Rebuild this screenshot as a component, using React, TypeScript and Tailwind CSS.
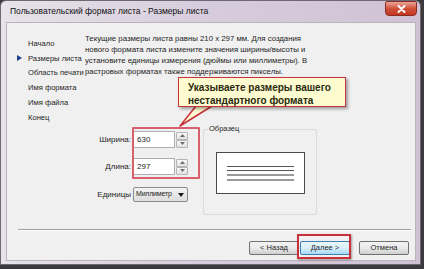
import React from "react";

const F = { fontFamily: '"Liberation Sans", Arial, sans-serif' } as const;

function Spinner() {
  return (
    <div className="flex flex-col w-[12px] h-[16px] ml-[1px]">
      <div className="flex-1 border border-[#b5b5b5] bg-gradient-to-b from-[#f7f7f7] to-[#e3e3e3] rounded-[1px] flex items-center justify-center">
        <svg width="5" height="3" viewBox="0 0 5 3"><polygon points="0,3 5,3 2.5,0" fill="#6d6d6d" /></svg>
      </div>
      <div className="flex-1 border border-[#b5b5b5] bg-gradient-to-b from-[#f7f7f7] to-[#e3e3e3] rounded-[1px] flex items-center justify-center">
        <svg width="5" height="3" viewBox="0 0 5 3"><polygon points="0,0 5,0 2.5,3" fill="#6d6d6d" /></svg>
      </div>
    </div>
  );
}

function NumField({ label, value }: { label: string; value: string }) {
  return (
    <div className="flex items-center h-[17px]">
      <div className="w-[48px] text-right pr-[2px] text-[8px] text-[#1e1e1e]">{label}</div>
      <div className="w-[42px] h-[17px] bg-white border border-[#abadb3] flex items-center pl-[3px] text-[8px] text-[#1e1e1e]">
        {value}
      </div>
      <Spinner />
    </div>
  );
}

function Btn({ children, primary }: { children: React.ReactNode; primary?: boolean }) {
  return (
    <div
      className={
        "h-[14px] w-[50px] rounded-[2px] border flex items-center justify-center text-[7.5px] text-[#1e1e1e] " +
        (primary
          ? "border-[#3c7fb1] bg-gradient-to-b from-[#eaf6fd] via-[#d9f0fc] to-[#a7d9f5]"
          : "border-[#707070] bg-gradient-to-b from-[#f2f2f2] via-[#ebebeb] to-[#cfcfcf]")
      }
    >
      {children}
    </div>
  );
}

export default function App() {
  const nav = ["Начало", "Размеры листа", "Область печати", "Имя формата", "Имя файла", "Конец"];
  return (
    <div className="relative w-[424px] h-[269px] overflow-hidden bg-[#3b3b3d]" style={F}>
      {/* window */}
      <div className="w-[421px] h-[265px] rounded-t-[6px] border border-[#6e6873] bg-gradient-to-r from-[#e6e3ea] via-[#d7ccdc] to-[#d0c2d4] flex flex-col pl-[5px] pr-[4px] pb-[3px]">
        <div className="h-[21px] flex items-center pl-[4px] text-[8.5px] text-[#111]">
          Пользовательский формат листа - Размеры листа
        </div>
        <div className="flex-1 bg-[#f0f0f0] border border-[#b9b3bd] flex flex-col">
          <div className="flex h-[206px]">
            {/* nav */}
            <div className="w-[78px] shrink-0 pt-[13px] pl-[10px] flex flex-col">
              {nav.map((n, i) => (
                <div key={n} className="h-[14.8px] flex items-center text-[7.6px] text-[#1e1e1e] whitespace-nowrap">
                  <div className="w-[11px] shrink-0 flex items-center">
                    {i === 1 && (
                      <svg width="5" height="6" viewBox="0 0 5 6"><polygon points="0,0 5,3 0,6" fill="#1f3f8f" /></svg>
                    )}
                  </div>
                  {n}
                </div>
              ))}
            </div>
            {/* main */}
            <div className="flex-1 flex flex-col pt-[10px]">
              <div className="text-[7.8px] leading-[11px] text-[#1e1e1e] whitespace-nowrap">
                <div>Текущие размеры листа равны 210 x 297 мм. Для создания</div>
                <div>нового формата листа измените значения ширины/высоты и</div>
                <div>установите единицы измерения (дюймы или миллиметры). В</div>
                <div>растровых форматах также поддерживаются пикселы.</div>
              </div>
              <div className="flex mt-[46px]">
                <div className="w-[118px] flex flex-col pt-[8px]">
                  <NumField label="Ширина:" value="630" />
                  <div className="h-[10px]" />
                  <NumField label="Длина:" value="297" />
                  <div className="h-[12px]" />
                  <div className="flex items-center h-[15px]">
                    <div className="w-[48px] text-right pr-[2px] text-[8px] text-[#1e1e1e]">Единицы</div>
                    <div className="w-[55px] h-[15px] rounded-[2px] border border-[#8a8a8a] bg-gradient-to-b from-[#f3f3f3] to-[#dcdcdc] flex items-center pl-[2px] pr-[3px] text-[7px] text-[#1e1e1e]">
                      <span className="flex-1 whitespace-nowrap tracking-[-0.2px]">Миллиметр</span>
                      <svg width="6" height="4" viewBox="0 0 6 4" className="ml-[1px] shrink-0"><polygon points="0,0 6,0 3,4" fill="#1a1a1a" /></svg>
                    </div>
                  </div>
                </div>
                {/* group box */}
                <div className="relative mt-[6px] w-[114px] h-[86px] border border-[#dcdcdc] rounded-[2px]">
                  <div className="absolute -top-[6px] left-[4px] px-[1px] bg-[#f0f0f0] text-[7.5px] leading-[10px] text-[#1e1e1e]">
                    Образец
                  </div>
                  <div className="ml-[12px] mt-[22px] w-[89px] h-[42px] bg-white border border-[#4a4a4a] flex flex-col items-center justify-center gap-[3px] pt-[1px]">
                    <div className="w-[67px] h-[1px] bg-[#555]" />
                    <div className="w-[67px] h-[1px] bg-[#555]" />
                    <div className="w-[67px] h-[2px] bg-[#9a9a9a]" />
                    <div className="w-[67px] h-[2px] bg-[#9a9a9a]" />
                  </div>
                </div>
              </div>
            </div>
          </div>
          <div className="ml-[11px] mr-[4px] h-[2px] border-t border-[#a0a0a0] bg-[#ffffff]" />
          <div className="flex justify-end pr-[6px] pt-[10px]">
            <Btn>&lt; Назад</Btn>
            <div className="w-[1px]" />
            <Btn primary>Далее &gt;</Btn>
            <div className="w-[9px]" />
            <Btn>Отмена</Btn>
          </div>
        </div>
      </div>

      {/* close button */}
      <div className="absolute top-[1px] left-[385px] w-[32px] h-[15px] rounded-b-[4px] rounded-t-[2px] border border-[#8a2a22] bg-gradient-to-b from-[#e8a597] via-[#d0503a] to-[#c3361f] flex items-center justify-center">
        <svg width="9" height="8" viewBox="0 0 9 8">
          <path d="M1.5 1 L7.5 7 M7.5 1 L1.5 7" stroke="#fff" strokeWidth="2" strokeLinecap="round" />
        </svg>
      </div>

      {/* annotation: red box around inputs */}
      <div className="absolute left-[132px] top-[127px] w-[68px] h-[52px] border-2 border-[#d7606a] rounded-[1px]" />

      {/* callout tail */}
      <svg className="absolute left-[176px] top-[104px]" width="40" height="26" viewBox="0 0 40 26">
        <polygon points="20,2 36,2 4,22" fill="#fdfbcf" stroke="#c8323a" strokeWidth="1.5" strokeLinejoin="round" />
      </svg>
      {/* callout */}
      <div className="absolute left-[178px] top-[77px] w-[168px] h-[30px] bg-[#fdfbcf] border-[1.5px] border-[#c8323a] shadow-[2px_2px_3px_rgba(0,0,0,0.35)] pl-[9px] pt-[3px] text-[10px] leading-[13px] font-bold text-[#2a2a10]">
        <div>Указываете размеры вашего</div>
        <div>нестандартного формата</div>
      </div>

      {/* annotation: red box around Далее */}
      <div className="absolute left-[297px] top-[234px] w-[54px] h-[25px] border-2 border-[#c9303a] shadow-[1px_1px_2px_rgba(0,0,0,0.35)]" />
    </div>
  );
}
